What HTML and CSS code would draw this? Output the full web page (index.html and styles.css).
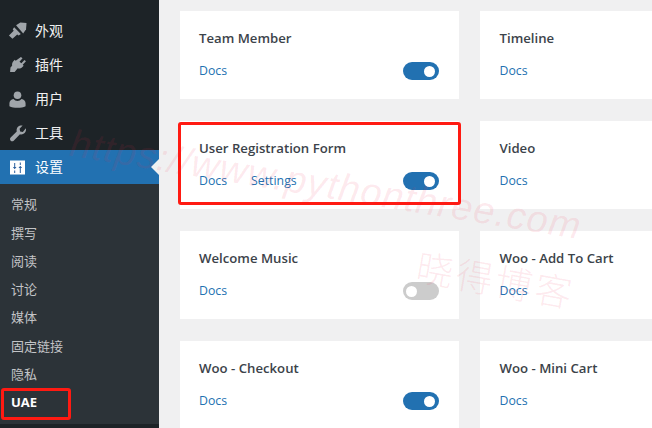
FILE: index.html
```html
<!DOCTYPE html>
<html lang="zh">
<head>
<meta charset="utf-8">
<title>UAE</title>
<link rel="stylesheet" href="styles.css">
</head>
<body>
<div class="page">
  <aside class="sidebar">
    <nav class="menu">
      <a class="menu-item"><svg class="icon" viewBox="0 0 20 20"><path d="M8.500 3.500L13 .5l6.500.5-.5 6.500-3 4.500z"/><path d="M6.500 5.500l7 7-2.300 1.600-1.500-1-5 4.600-3.700-3.500 5-5-1-1.500z"/></svg><span>外观</span></a>
      <a class="menu-item"><svg class="icon" viewBox="0 0 20 20"><path d="M13.600 1l1.700 1.400-3.200 3.600 2 1.700 3.200-3.600 1.600 1.400-3.400 3.800 1 .9-1.300 1.400c-1.500 1.500-3.500 2-5 1.400l-3.200 3.900H2.200l.4-4.800c.4-.4 1.100-1.100 1.800-2-.4-1.500.1-3.400 1.500-4.800l1.200-1.300 1 .9z"/></svg><span>插件</span></a>
      <a class="menu-item"><svg class="icon" viewBox="0 0 20 20"><circle cx="10" cy="5.500" r="4"/><path d="M1.500 17v-3c0-2.200 1.700-3.900 4.300-4.500 1 1.300 2.600 2.100 4.200 2.100s3.200-.8 4.200-2.100c2.600.6 4.300 2.300 4.300 4.500v3c-2 1.200-5.300 1.800-8.500 1.800s-6.500-.6-8.500-1.800z"/></svg><span>用户</span></a>
      <a class="menu-item"><svg class="icon" viewBox="0 0 20 20"><path d="M18.800 4.600c.5 1.800 0 3.700-1.300 5-1.400 1.300-3.200 1.700-4.900 1.200L6 17.500c-.9.900-2.300.9-3.200 0s-.9-2.300 0-3.200l6.400-6.500c-.4-1.700 0-3.500 1.300-4.800 1.300-1.300 3.200-1.800 4.900-1.300L12.200 5l.6 2.800 2.800.7z"/></svg><span>工具</span></a>
      <a class="menu-item current"><svg class="icon" viewBox="0 0 19 19"><rect class="tile" x="2" y="2.500" width="15" height="14"/><path class="glyph" d="M6.200 5h1v4h1.300l-1.800 2.200L4.900 9h1.300zM6.200 12.500h1V15h-1zM11.800 4.500h1V7h-1zM12.300 7.800L14.100 10h-1.300v5h-1v-5h-1.300z"/></svg><span>设置</span></a>
    </nav>
    <ul class="submenu">
      <li>常规</li>
      <li>撰写</li>
      <li>阅读</li>
      <li>讨论</li>
      <li>媒体</li>
      <li>固定链接</li>
      <li>隐私</li>
      <li class="active">UAE</li>
    </ul>
  </aside>
  <main class="content">
    <section class="card"><h3>Team Member</h3><div class="row"><a>Docs</a><i class="toggle on"></i></div></section>
    <section class="card"><h3>Timeline</h3><div class="row"><a>Docs</a></div></section>
    <section class="card"><h3>User Registration Form</h3><div class="row"><a>Docs</a><a>Settings</a><i class="toggle on"></i></div></section>
    <section class="card"><h3>Video</h3><div class="row"><a>Docs</a></div></section>
    <section class="card"><h3>Welcome Music</h3><div class="row"><a>Docs</a><i class="toggle"></i></div></section>
    <section class="card"><h3>Woo - Add To Cart</h3><div class="row"><a>Docs</a></div></section>
    <section class="card"><h3>Woo - Checkout</h3><div class="row"><a>Docs</a><i class="toggle on"></i></div></section>
    <section class="card"><h3>Woo - Mini Cart</h3><div class="row"><a>Docs</a></div></section>
  </main>
  <div class="mark mark-card"></div>
  <div class="mark mark-uae"></div>
  <div class="wm wm-url">https://www.pythonthree.com</div>
  <div class="wm wm-cn">晓得博客</div>
</div>
</body>
</html>
```
FILE: styles.css
```css
* { box-sizing: border-box; }
html, body { margin: 0; padding: 0; }
body { width: 652px; height: 428px; overflow: hidden; background: #f0f0f1; font-family: "Open Sans", "Noto Sans CJK SC", sans-serif; }
.page { position: relative; display: flex; width: 652px; height: 428px; overflow: hidden; }
.sidebar { flex: 0 0 159px; background: #1d2327; padding-top: 14px; font-family: "Noto Sans CJK SC", sans-serif; }
.menu { display: flex; flex-direction: column; }
.menu-item { position: relative; display: flex; align-items: center; gap: 8px; height: 34px; padding-left: 8px; color: #f0f0f1; font-size: 14px; }
.menu-item span { margin-bottom: 2px; }
.icon { width: 19px; height: 19px; fill: #a0a5aa; flex: none; }
.current { background: #2271b1; color: #fff; }
.current::after { content: ""; position: absolute; right: 0; top: 9px; border: 8px solid transparent; border-right-color: #f0f0f1; border-left-width: 0; }
.tile { fill: #fff; }
.glyph { fill: #2a5f9e; }
.submenu { list-style: none; margin: 0; padding: 6.300px 0 8px; background: #2c3338; }
.submenu li { height: 28.250px; line-height: 28.250px; padding-left: 11px; color: #c3c4c7; font-size: 13px; }
.submenu .active { color: #fff; font-weight: 700; font-family: "Open Sans", sans-serif; }
.content { flex: none; display: grid; grid-template-columns: 279px 279px; grid-auto-rows: 88px; gap: 22px 21.500px; padding: 11px 0 0 20.500px; }
.card { background: #fff; padding: 17px 20px 0 19.500px; }
.card h3 { margin: 0; height: 20px; font-size: 13.200px; line-height: 20px; font-weight: 600; color: #3c434a; }
.row { display: flex; align-items: center; gap: 24px; height: 18px; margin-top: 14px; font-size: 12.300px; color: #2271b1; }
.row a { margin-bottom: 2px; }
.toggle { position: relative; width: 36px; height: 18px; margin-left: auto; border-radius: 9px; background: #ccc; }
.toggle::after { content: ""; position: absolute; top: 3.500px; left: 3.500px; width: 11px; height: 11px; border-radius: 50%; background: #fff; }
.toggle.on { background: #2271b1; }
.toggle.on::after { left: 21.500px; }
.mark { position: absolute; border: 3px solid #ff1a12; border-radius: 3px; }
.mark-card { left: 178px; top: 122px; width: 283px; height: 83px; }
.mark-uae { left: 1px; top: 388px; width: 70px; height: 32px; }
.wm { position: absolute; color: rgba(240, 40, 80, .1); white-space: nowrap; pointer-events: none; transform-origin: left top; }
.wm-url { left: 74px; top: 122px; font-family: "Liberation Sans", sans-serif; font-style: italic; font-size: 38px; letter-spacing: 1.100px; transform: rotate(9.300deg); }
.wm-cn { left: 422px; top: 238px; font-family: "Noto Sans CJK SC", sans-serif; font-weight: 300; font-size: 37px; letter-spacing: 3px; transform: rotate(10deg); }
```
